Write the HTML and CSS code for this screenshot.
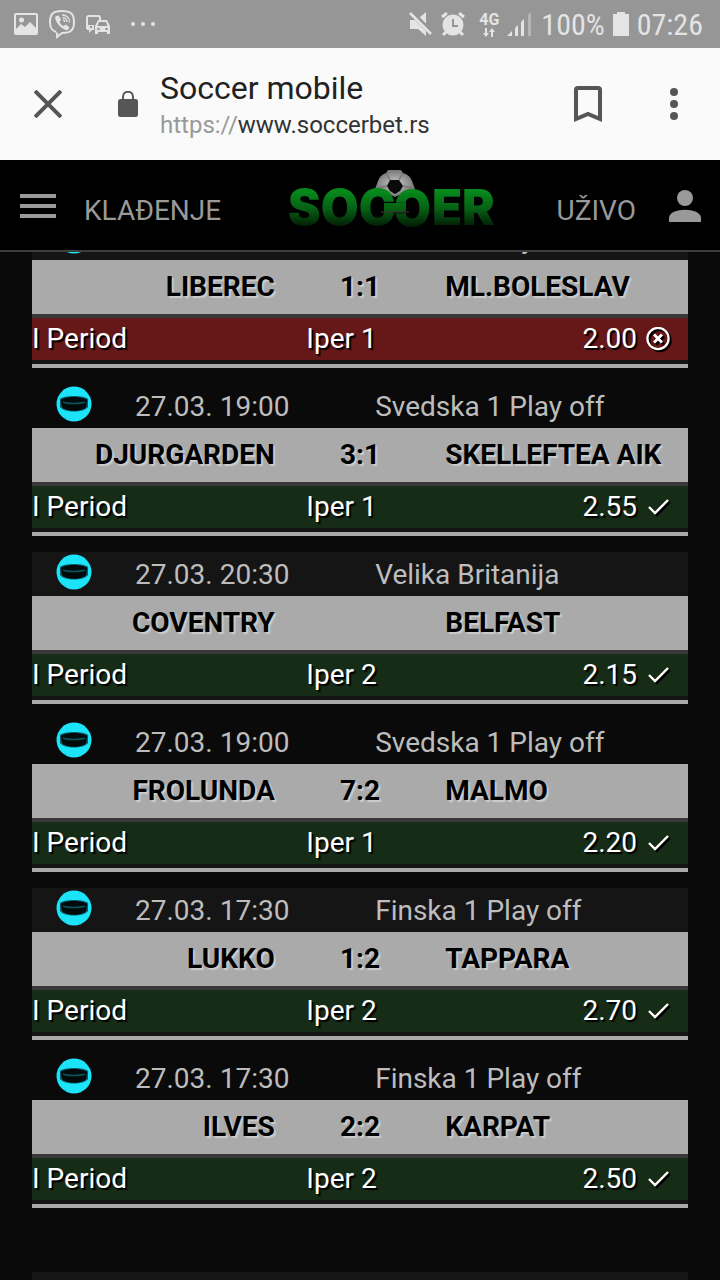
FILE: index.html
```html
<!DOCTYPE html>
<html lang="sr-Latn">
<head>
    <meta charset="UTF-8">
    <meta name="viewport" content="width=device-width, initial-scale=1.0">
    <title>Soccer mobile</title>
    <link rel="stylesheet" href="styles.css">
</head>
<body>
    <!-- shared icons -->
    <svg class="sprite" aria-hidden="true">
        <symbol id="puck" viewBox="0 0 36 36">
            <circle cx="18" cy="18" r="17.5" fill="#1be3f8"/>
            <path d="M4 13C8 9 28 9 32 13V21C28 27 8 27 4 21Z" fill="#0a5a64"/>
            <path d="M5 14C9 10 27 10 31 14L30 21C26 26 10 26 6 21Z" fill="#020a0c"/>
            <path d="M7 16C12 18 24 18 29 16" fill="none" stroke="#0c5660" stroke-width="1.6"/>
        </symbol>
        <symbol id="check" viewBox="0 0 24 24">
            <path d="M3 12L9 18L22 5" fill="none" stroke="#fff" stroke-width="2.4"/>
        </symbol>
        <symbol id="cross" viewBox="0 0 24 24">
            <circle cx="12" cy="11.5" r="10.6" fill="none" stroke="#fff" stroke-width="2.2"/>
            <path d="M8 7.5L16 15.5M16 7.5L8 15.5" fill="none" stroke="#fff" stroke-width="2.8"/>
        </symbol>
    </svg>

    <div class="status-bar">
        <div class="status-left">
            <svg width="24" height="24" viewBox="0 0 24 24"><path fill="#e4e4e4" fill-rule="evenodd" d="M2 1H22Q24 1 24 3V21Q24 23 22 23H2Q0 23 0 21V3Q0 1 2 1ZM2 3V17L7 12L11 15L16 10L22 16V3Z"/><circle cx="7.5" cy="8" r="2.5" fill="#e4e4e4"/></svg>
            <svg width="28" height="30" viewBox="0 0 28 30" fill="none" stroke="#e4e4e4"><path stroke-width="2" d="M8 23C3 21 2 18 2 13C2 5 5 2 14 2C23 2 26 5 26 13C26 21 23 24 14 24L9 28V23.5"/><path fill="#e4e4e4" stroke="none" d="M8 7L10.5 6.5L13 10.5L11.5 13C12.5 15 13.5 16 15.5 17L18 15.5L21.5 18.5C20.5 21 19 22 16.5 20.5C12 18 9 15 7.5 10.5C7 9 7 8 8 7Z"/><path stroke-width="1.3" d="M14 6C18.5 6 21.5 9 21.5 13.5M14.5 8.5C17 8.5 19 10.5 19 13M15 11C16.2 11 16.7 12 16.7 13"/></svg>
            <svg width="24" height="24" viewBox="0 0 24 24"><path fill="none" stroke="#e4e4e4" stroke-width="2" d="M8 16H1V6Q1 4 3 4H12Q14 4 14 6V8"/><path fill="#e4e4e4" d="M1 13H8V18H6L3 21V18H1ZM12 8H21L24 14V22H21V20H12V22H9V14Z"/><path fill="#969696" d="M13 10H20L21.5 14H11.5Z"/><circle cx="12.5" cy="17" r="1.3" fill="#969696"/><circle cx="20.5" cy="17" r="1.3" fill="#969696"/><circle cx="5" cy="15" r="1.2" fill="#969696"/></svg>
            <svg class="more-dots" width="26" height="24" viewBox="0 0 26 24" fill="#e4e4e4"><circle cx="3" cy="12" r="2"/><circle cx="13" cy="12" r="2"/><circle cx="23" cy="12" r="2"/></svg>
        </div>
        <div class="status-right">
            <svg width="24" height="24" viewBox="0 0 24 24"><path fill="#e4e4e4" d="M1 8H6L17 19V24L9 17H1ZM10 6L17 0V13Z"/><path stroke="#969696" stroke-width="2" d="M4 0L24 20"/><path stroke="#e4e4e4" stroke-width="2.6" d="M1 1L22 22"/></svg>
            <svg width="24" height="24" viewBox="0 0 24 24"><circle cx="12" cy="13" r="10.5" fill="#e4e4e4"/><path fill="none" stroke="#e4e4e4" stroke-width="3" d="M1 5L6 1M18 1L23 5M5 20L2 23M19 20L22 23"/><path fill="none" stroke="#969696" stroke-width="2" d="M12 7V14H17"/></svg>
            <div class="network">
                <span>4G</span>
                <svg width="14" height="9" viewBox="0 0 14 9" fill="#e4e4e4"><path d="M3 0H5V5H7L4 9L1 5H3ZM9 9H11V4H13L10 0L7 4H9Z"/></svg>
            </div>
            <svg width="26" height="24" viewBox="0 0 26 24" fill="#e4e4e4"><path d="M0 24L5 19V24ZM8 24V16L11 13V24ZM14 24V10L17 7V24Z"/><path fill="#b6b6b6" d="M21 24V3L24 0V24Z"/></svg>
            <span class="battery-level">100%</span>
            <svg width="16" height="24" viewBox="0 0 16 24" fill="#e4e4e4"><path d="M4 0H12V2H16V24H0V2H4Z"/></svg>
            <span class="clock">07:26</span>
        </div>
    </div>

    <div class="browser-bar">
        <button class="icon-button close" aria-label="Close"><svg width="28" height="28" viewBox="0 0 28 28"><path d="M1 1L27 27M27 1L1 27" stroke="#565656" stroke-width="4"/></svg></button>
        <svg class="lock" width="20" height="26" viewBox="0 0 20 26"><rect y="8" width="20" height="18" rx="2.5" fill="#565656"/><path d="M5 9V6C5 -1 15 -1 15 6V9" fill="none" stroke="#565656" stroke-width="2"/></svg>
        <div class="page-info">
            <div class="page-title">Soccer mobile</div>
            <div class="page-url"><span class="scheme">https://</span>www.soccerbet.rs</div>
        </div>
        <button class="icon-button" aria-label="Bookmark"><svg width="28" height="36" viewBox="0 0 28 36"><path d="M2 33V4Q2 2 4 2H24Q26 2 26 4V33L14 28Z" fill="none" stroke="#565656" stroke-width="4"/></svg></button>
        <button class="icon-button menu" aria-label="More"><svg width="8" height="32" viewBox="0 0 8 32" fill="#565656"><circle cx="4" cy="4" r="4"/><circle cx="4" cy="16" r="4"/><circle cx="4" cy="28" r="4"/></svg></button>
    </div>

    <header class="site-header">
        <div class="header-side">
            <button class="icon-button" aria-label="Meni"><svg width="36" height="24" viewBox="0 0 36 24" fill="#999"><path d="M0 0H36V4H0ZM0 10H36V14H0ZM0 20H36V24H0Z"/></svg></button>
            <a class="nav-link" href="#kladjenje">KLAĐENJE</a>
        </div>
        <a class="logo" href="#home" aria-label="Soccer">
            <svg width="216" height="72" viewBox="0 0 216 72">
                <defs>
                    <linearGradient id="green" gradientUnits="userSpaceOnUse" x1="0" y1="22" x2="0" y2="58">
                        <stop offset="0" stop-color="#078a1c"/>
                        <stop offset="0.5" stop-color="#066014"/>
                        <stop offset="1" stop-color="#021a04"/>
                    </linearGradient>
                    <linearGradient id="greenFlip" gradientUnits="userSpaceOnUse" x1="0" y1="-22" x2="0" y2="-58">
                        <stop offset="0" stop-color="#078a1c"/>
                        <stop offset="0.5" stop-color="#066014"/>
                        <stop offset="1" stop-color="#021a04"/>
                    </linearGradient>
                    <radialGradient id="ballShade">
                        <stop offset="0.3" stop-color="#b0b0b0"/>
                        <stop offset="1" stop-color="#777"/>
                    </radialGradient>
                </defs>
                <path d="M107 1H120L122 4Q129 6 131 12L134 20L131 26L124 23L114 28L104 23L97 26L94 20L97 12Q99 6 105 4Z" fill="url(#ballShade)"/>
                <path d="M109 11H118L122 17L119 22L114 25L109 22L106 17Z" fill="#0a0a0a"/>
                <path d="M105 4L109 11M122 4L118 11M106 17L97 19M122 17L131 19" stroke="#777" stroke-width="1.5" fill="none"/>
                <g class="logo-text">
                    <text x="7" y="56" fill="url(#green)">SOC</text>
                    <text x="-150" y="-21" fill="url(#greenFlip)" transform="rotate(180)">C</text>
                    <text x="151" y="56" fill="url(#green)">ER</text>
                </g>
                <!-- bar that joins the two Cs -->
                <path d="M103 34H125V43H103Z" fill="url(#green)"/>
                <path d="M100 43H128" stroke="#3c3c3c" stroke-width="1"/>
            </svg>
        </a>
        <div class="header-side right">
            <a class="nav-link" href="#uzivo">UŽIVO</a>
            <button class="icon-button" aria-label="Nalog"><svg width="32" height="32" viewBox="0 0 32 32" fill="#999"><circle cx="16" cy="8" r="8"/><path d="M0 32V28C0 17 32 17 32 28V32Z"/></svg></button>
        </div>
    </header>

    <main class="ticket">
        <div class="match">
            <div class="match-meta">
                <svg class="sport"><use href="#puck"/></svg>
                <span>27.03. 17:30</span>
                <span>Ceska 1 Play off</span>
            </div>
            <div class="match-teams">
                <span class="home">LIBEREC</span>
                <span class="score">1:1</span>
                <span class="away">ML.BOLESLAV</span>
            </div>
            <div class="match-bet lost">
                <span>I Period</span>
                <span>Iper 1</span>
                <span class="odds">2.00 <svg class="result"><use href="#cross"/></svg></span>
            </div>
        </div>

        <div class="match">
            <div class="match-meta">
                <svg class="sport"><use href="#puck"/></svg>
                <span>27.03. 19:00</span>
                <span>Svedska 1 Play off</span>
            </div>
            <div class="match-teams">
                <span class="home">DJURGARDEN</span>
                <span class="score">3:1</span>
                <span class="away">SKELLEFTEA AIK</span>
            </div>
            <div class="match-bet won">
                <span>I Period</span>
                <span>Iper 1</span>
                <span class="odds">2.55 <svg class="result"><use href="#check"/></svg></span>
            </div>
        </div>

        <div class="match">
            <div class="match-meta">
                <svg class="sport"><use href="#puck"/></svg>
                <span>27.03. 20:30</span>
                <span>Velika Britanija</span>
            </div>
            <div class="match-teams">
                <span class="home">COVENTRY</span>
                <span class="score"></span>
                <span class="away">BELFAST</span>
            </div>
            <div class="match-bet won">
                <span>I Period</span>
                <span>Iper 2</span>
                <span class="odds">2.15 <svg class="result"><use href="#check"/></svg></span>
            </div>
        </div>

        <div class="match">
            <div class="match-meta">
                <svg class="sport"><use href="#puck"/></svg>
                <span>27.03. 19:00</span>
                <span>Svedska 1 Play off</span>
            </div>
            <div class="match-teams">
                <span class="home">FROLUNDA</span>
                <span class="score">7:2</span>
                <span class="away">MALMO</span>
            </div>
            <div class="match-bet won">
                <span>I Period</span>
                <span>Iper 1</span>
                <span class="odds">2.20 <svg class="result"><use href="#check"/></svg></span>
            </div>
        </div>

        <div class="match">
            <div class="match-meta">
                <svg class="sport"><use href="#puck"/></svg>
                <span>27.03. 17:30</span>
                <span>Finska 1 Play off</span>
            </div>
            <div class="match-teams">
                <span class="home">LUKKO</span>
                <span class="score">1:2</span>
                <span class="away">TAPPARA</span>
            </div>
            <div class="match-bet won">
                <span>I Period</span>
                <span>Iper 2</span>
                <span class="odds">2.70 <svg class="result"><use href="#check"/></svg></span>
            </div>
        </div>

        <div class="match">
            <div class="match-meta">
                <svg class="sport"><use href="#puck"/></svg>
                <span>27.03. 17:30</span>
                <span>Finska 1 Play off</span>
            </div>
            <div class="match-teams">
                <span class="home">ILVES</span>
                <span class="score">2:2</span>
                <span class="away">KARPAT</span>
            </div>
            <div class="match-bet won">
                <span>I Period</span>
                <span>Iper 2</span>
                <span class="odds">2.50 <svg class="result"><use href="#check"/></svg></span>
            </div>
        </div>

        <div class="ticket-footer"></div>
    </main>
</body>
</html>
```
FILE: styles.css
```css
* {
    box-sizing: border-box;
}
body {
    margin: 0;
    background: #0a0a0a;
    color: #fff;
    font-family: Roboto, sans-serif;
    font-size: 28px;
    line-height: 32px;
}
svg {
    display: block;
    flex-shrink: 0;
}
.sprite {
    position: absolute;
    width: 0;
    height: 0;
}
.icon-button {
    padding: 0;
    border: 0;
    background: none;
    cursor: pointer;
}

/* phone status bar */
.status-bar {
    display: flex;
    justify-content: space-between;
    align-items: center;
    height: 48px;
    padding: 0 17px 0 14px;
    background: #969696;
    color: #e4e4e4;
}
.status-left,
.status-right {
    display: flex;
    align-items: center;
    gap: 8px;
}
.status-left {
    gap: 10px;
}
.more-dots {
    margin-left: 10px;
}
.battery-level,
.clock {
    padding-top: 2px;
    font-family: "Roboto Condensed", Roboto, sans-serif;
    font-size: 30px;
}
.network {
    display: flex;
    flex-direction: column;
    align-items: center;
    margin-left: 6px;
    font-size: 16px;
    font-weight: 700;
    line-height: 16px;
}

/* browser toolbar */
.browser-bar {
    display: flex;
    align-items: center;
    height: 112px;
    padding: 0 42px 0 34px;
    background: #fafafa;
}
.lock {
    margin: 0 22px 0 56px;
}
.page-info {
    flex: 1;
    padding-top: 2px;
}
.page-title {
    color: #212121;
    font-size: 32px;
    line-height: 40px;
}
.page-url {
    color: #333;
    font-size: 24px;
    line-height: 34px;
}
.scheme {
    color: #999;
}
.menu {
    margin-left: 68px;
}

/* site header, the ticket scrolls under it */
.site-header {
    position: sticky;
    top: 0;
    z-index: 1;
    display: flex;
    justify-content: space-between;
    align-items: center;
    height: 92px;
    padding: 0 19px 0 20px;
    background: #000;
    border-bottom: 2px solid #3e3e3e;
}
.header-side {
    display: flex;
    align-items: center;
    gap: 28px;
    padding-top: 2px;
}
.right {
    gap: 33px;
}
.nav-link {
    padding-top: 10px;
    color: #999;
    text-decoration: none;
}
.logo-text {
    font-family: Inter, sans-serif;
    font-size: 49px;
    font-weight: 900;
}

/* ticket */
.ticket {
    margin-top: -36px;
    padding: 0 32px;
}
.match {
    margin-bottom: 16px;
    border-bottom: 4px solid #aaa;
}
.match:nth-child(odd) .match-meta {
    background: #151515;
}
.match-meta {
    display: grid;
    grid-template-columns: 79px 38% 1fr;
    height: 44px;
    padding: 2px 0 0 24px;
    color: #bdbdbd;
    line-height: 42px;
}
.sport {
    width: 36px;
    height: 36px;
}
.match-teams {
    display: grid;
    grid-template-columns: 37% 26% 37%;
    background: #aaa;
    border-bottom: 4px solid #383838;
    color: #000;
    font-weight: 700;
    line-height: 54px;
    text-shadow: 2px 2px 1px #ccc;
}
.home {
    text-align: right;
}
.score {
    text-align: center;
}
.match-bet {
    display: grid;
    grid-template-columns: 43% 1fr auto;
    padding-right: 18px;
    border-bottom: 4px solid #141414;
    line-height: 42px;
    text-shadow: 2px 2px 1px #000;
}
.won {
    background: #172c17;
}
.lost {
    background: #661717;
}
.odds {
    display: flex;
    align-items: center;
    gap: 9px;
}
.result {
    width: 24px;
    height: 24px;
    filter: drop-shadow(2px 2px 0 #000);
}
.ticket-footer {
    height: 8px;
    margin-top: 64px;
    background: #151515;
}
```
